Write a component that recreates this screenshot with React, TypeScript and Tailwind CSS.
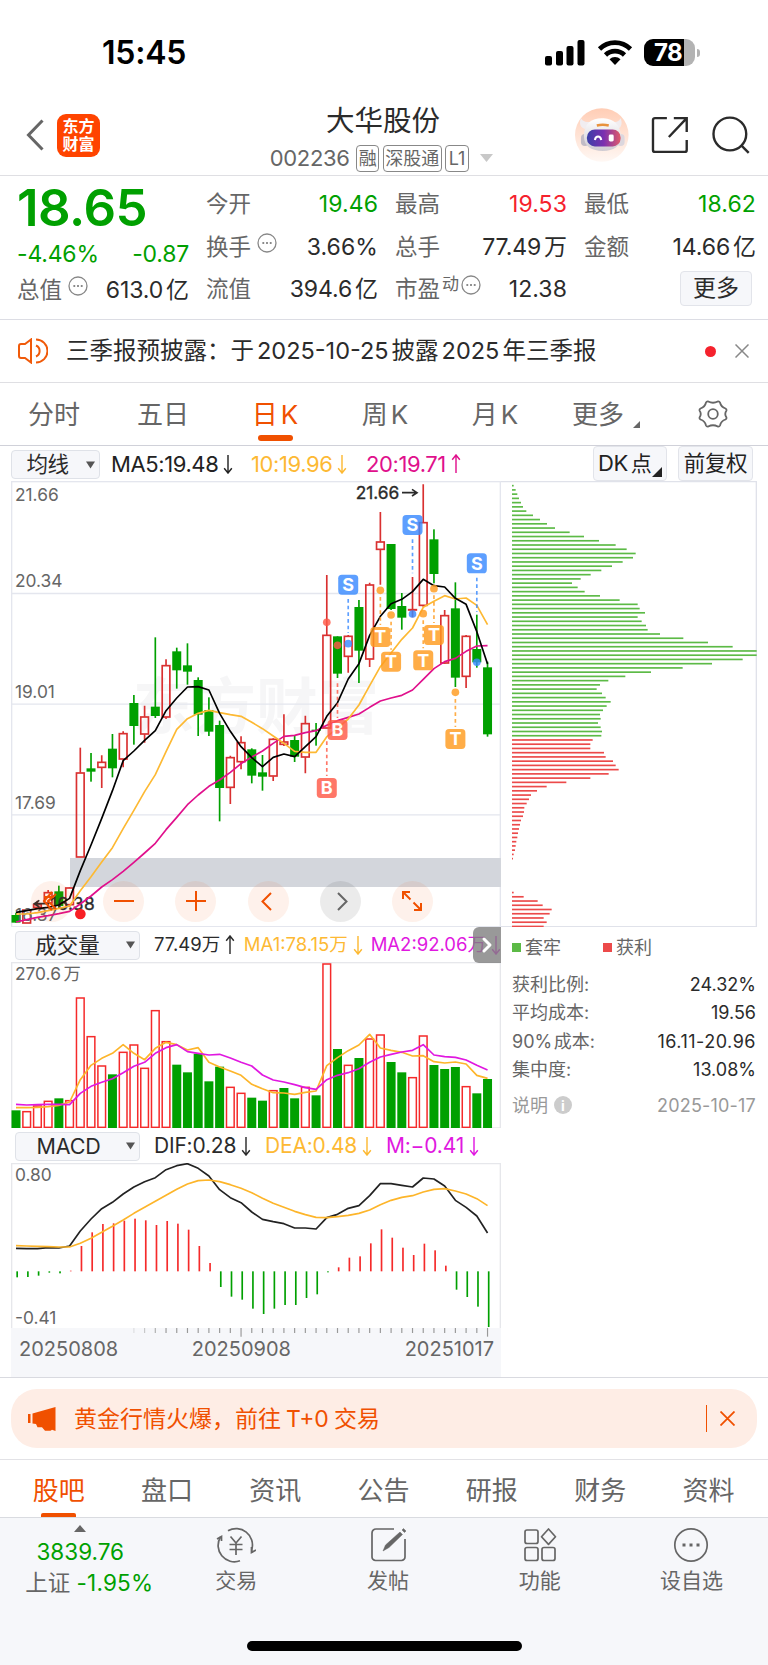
import type { ReactNode } from "react";
import { ChevronRight } from "lucide-react";

// chart coordinates are kept in thirds of a pixel
const STEP = 32.15;
const cx = (i: number) => 48 + STEP * i;
const line = (ys: number[]) => ys.map((y, i) => `${cx(i)},${y}`).join(" ");

type Candle = [up: 0 | 1, high: number, top: number, bottom: number, low: number];

const candles: Candle[] = [
  [0, 1298, 1305, 1328, 1328], [1, 1288, 1289, 1330, 1330], [1, 1262, 1273, 1283, 1285], [1, 1230, 1237, 1270, 1284],
  [0, 1217, 1234, 1278, 1285], [1, 1222, 1223, 1275, 1280], [1, 803, 878, 1132, 1132], [0, 819, 865, 875, 905],
  [1, 826, 846, 863, 924], [0, 762, 806, 865, 892], [1, 754, 760, 838, 862], [0, 645, 669, 738, 794],
  [1, 677, 710, 763, 788], [0, 472, 680, 708, 714], [1, 538, 556, 712, 717], [0, 503, 514, 571, 626],
  [0, 490, 556, 575, 614], [0, 592, 600, 704, 768], [0, 652, 690, 755, 768], [0, 722, 735, 924, 1024],
  [1, 827, 832, 923, 972], [1, 769, 787, 846, 868], [0, 805, 808, 887, 910], [0, 825, 877, 890, 932],
  [1, 775, 777, 889, 903], [1, 703, 785, 794, 798], [0, 768, 780, 830, 846], [1, 707, 730, 832, 880],
  [0, 729, 749, 753, 797], [1, 285, 465, 745, 745], [0, 469, 469, 581, 594], [1, 465, 468, 530, 578],
  [0, 360, 381, 512, 609], [1, 308, 314, 538, 561], [1, 96, 185, 209, 314], [0, 192, 192, 387, 390],
  [0, 339, 378, 413, 449], [1, 291, 388, 391, 412], [1, 13, 127, 377, 380], [0, 148, 178, 282, 310],
  [1, 390, 406, 550, 552], [0, 307, 385, 593, 621], [1, 465, 468, 590, 624], [0, 404, 507, 547, 563],
  [0, 545, 562, 763, 770],
];

const ma5 = [1297, 1292, 1286, 1282, 1275, 1255, 1172, 1095, 1015, 932, 842, 813, 781, 752, 692, 654, 621, 620, 630, 700, 754, 800, 833, 860, 832, 822, 830, 800, 770, 709, 668, 597, 551, 466, 409, 371, 358, 335, 298, 317, 321, 355, 373, 455, 552];
const ma10 = [1302, 1302, 1298, 1292, 1285, 1278, 1232, 1190, 1146, 1103, 1046, 991, 935, 884, 815, 748, 716, 700, 691, 698, 704, 709, 727, 746, 768, 790, 814, 817, 817, 770, 745, 717, 675, 617, 560, 519, 478, 444, 382, 364, 347, 357, 354, 376, 434];
const ma20 = [1326, 1319, 1312, 1307, 1301, 1294, 1272, 1248, 1221, 1199, 1174, 1147, 1119, 1090, 1049, 1012, 974, 945, 919, 900, 877, 851, 831, 813, 790, 769, 766, 758, 752, 736, 722, 712, 702, 682, 663, 654, 646, 630, 598, 566, 545, 535, 514, 498, 497];

const volUp = [1, 2, 3, 5, 6, 7, 8, 10, 11, 12, 13, 14, 20, 21, 24, 27, 29, 31, 33, 34, 37, 38, 42];
const volTop = [571, 573, 556, 542, 535, 540, 232, 348, 436, 463, 395, 373, 443, 270, 363, 434, 457, 401, 484, 440, 500, 518, 533, 542, 510, 504, 535, 500, 526, 130, 387, 434, 414, 355, 343, 426, 457, 471, 346, 435, 447, 441, 498, 520, 477];
const volMa1 = [563, 563, 562, 560, 556, 546, 479, 436, 415, 400, 374, 400, 419, 385, 367, 374, 390, 383, 427, 441, 453, 466, 493, 506, 518, 519, 523, 517, 513, 437, 413, 392, 375, 343, 384, 391, 397, 408, 407, 425, 429, 426, 432, 466, 475];
const volMa2 = [553, 555, 554, 553, 553, 554, 520, 499, 487, 476, 458, 439, 427, 400, 383, 374, 395, 400, 405, 403, 414, 427, 438, 465, 480, 486, 494, 503, 508, 479, 466, 458, 446, 427, 411, 403, 396, 391, 374, 405, 410, 412, 420, 436, 450];

const dif = [985, 986, 986, 983, 984, 978, 933, 897, 866, 847, 822, 801, 785, 773, 749, 737, 731, 745, 768, 809, 833, 848, 876, 898, 905, 911, 924, 924, 927, 893, 883, 865, 857, 827, 791, 791, 796, 801, 774, 777, 798, 841, 862, 888, 939];
const dea = [977, 978, 979, 980, 981, 981, 970, 955, 937, 919, 900, 880, 862, 844, 826, 808, 792, 782, 780, 785, 794, 805, 818, 835, 850, 862, 874, 884, 892, 893, 890, 886, 880, 870, 854, 841, 832, 827, 816, 808, 806, 813, 822, 836, 857];
const hist = [1072, 1071, 1067, 1058, 1060, 1052, 978, 937, 912, 910, 902, 896, 901, 915, 903, 911, 929, 978, 1029, 1101, 1130, 1139, 1166, 1182, 1166, 1155, 1155, 1134, 1123, 1057, 1042, 1013, 1009, 970, 928, 953, 983, 1005, 971, 991, 1037, 1109, 1131, 1160, 1221];

const trapped = [41, 47, 52, 57, 63, 69, 79, 99, 120, 141, 165, 209, 252, 297, 347, 380, 407, 399, 368, 336, 304, 272, 242, 216, 233, 254, 300, 359, 413, 419, 435, 413, 425, 438, 443, 480, 550, 624, 698, 770, 770, 728, 636, 548, 453, 376, 325, 300, 290, 306, 317, 332, 320, 309, 300, 302, 294, 302, 306, 304];
const profit = [278, 271, 271, 312, 317, 339, 347, 356, 326, 271, 199, 140, 111, 93, 87, 80, 73, 72, 69, 63, 60, 57, 54, 52, 49, 47, 45, 41, 39, 36, 36, 36, 36, 36, 36, 36, 41, 71, 113, 128, 155, 149, 131, 140, 131];

// letter, candle index, dot y, label y
const marks: [string, number, number, number][] = [
  ["B", 29, 427, 924], ["B", 30, 496, 750], ["S", 31, 491, 314], ["T", 34, 331, 471], ["T", 35, 405, 545],
  ["S", 37, 402, 135], ["T", 38, 401, 541], ["T", 39, 326, 465], ["T", 41, 637, 777], ["S", 43, 547, 250],
];
const markColor: Record<string, string> = { B: "#ff5a48", S: "#3a8bff", T: "#ff9c1f" };

const periods = ["分时", "五日", "日K", "周K", "月K"];
const infoTabs = ["股吧", "盘口", "资讯", "公告", "研报", "财务", "资料"];

function Dots() {
  return (
    <svg className="mb-2 ml-1.5 h-5 w-5 shrink-0" viewBox="0 0 20 20" fill="none" stroke="#888" strokeWidth="1.3">
      <circle cx="10" cy="10" r="9" />
      <path d="M5.4 10h1.8M9.1 10h1.8M12.8 10h1.8" strokeWidth="1.8" />
    </svg>
  );
}

function Quote({ label, value, unit, color = "text-[#2b2b2b]", extra }: { label: string; value: string; unit?: string; color?: string; extra?: ReactNode }) {
  return (
    <div className="flex h-[42.5px] items-center justify-between">
      <div className="flex items-center text-[#666]">
        {label}
        {extra}
      </div>
      <div className={`flex text-[23px] ${unit ? "tracking-[-0.1px]" : "tracking-[0.1px]"} ${color}`}>
        {value}
        {unit && <span className="ml-[3px]">{unit}</span>}
      </div>
    </div>
  );
}

function Select({ label, className }: { label: string; className: string }) {
  return (
    <div className={`flex shrink-0 items-center rounded-sm border border-[#dfe2e8] bg-[#f6f7fa] text-[#2b2b2b] ${className}`}>
      <span className="flex-1 text-center">{label}</span>
      <svg className="mr-1 h-2 w-[9px]" viewBox="0 0 9 8" fill="#555">
        <path d="M0 .5h9L4.5 7.5z" />
      </svg>
    </div>
  );
}

function Arrow({ up }: { up?: boolean }) {
  return (
    <svg className="ml-[5px] h-[20px] w-2.5 shrink-0" viewBox="0 0 10 21" fill="none" stroke="currentColor" strokeWidth="1.5">
      <path d={up ? "M5 20V1M1 6l4-5 4 5" : "M5 1v19M1 15l4 5 4-5"} />
    </svg>
  );
}

function StatusBar() {
  return (
    <div className="flex h-[80px] items-center pt-[25px] pr-[68px] pl-[102px]">
      <span className="flex-1 text-[32px] font-semibold tracking-[-0.2px] text-black">15:45</span>
      <svg className="h-[26px] w-[40px]" viewBox="0 0 40 26">
        <rect x="0" y="16" width="7" height="9.5" rx="2" />
        <rect x="11" y="11" width="7" height="14.5" rx="2" />
        <rect x="21.5" y="6" width="7" height="19.5" rx="2" />
        <rect x="32.5" y="0" width="7" height="25.5" rx="2" />
      </svg>
      <svg className="ml-3 h-[26px] w-[36px]" viewBox="0 0 36 26">
        <path d="M2.5 9a22 22 0 0 1 31 0" fill="none" stroke="#000" strokeWidth="4.6" />
        <path d="M8.5 15a13.5 13.5 0 0 1 19 0" fill="none" stroke="#000" strokeWidth="4.6" />
        <path d="M18 25l-5.5-5.7a8 8 0 0 1 11 0z" />
      </svg>
      <div className="ml-[11px] flex h-[27px] w-[51px] items-center overflow-hidden rounded-[9px] bg-[linear-gradient(90deg,#000_78%,#b3b3b3_78%)] pl-[10px] text-[24px] font-bold tracking-[-0.5px] text-white">
        78
      </div>
      <div className="ml-0.5 h-2 w-[3px] rounded-r-full bg-[#b3b3b3]" />
    </div>
  );
}

function Robot() {
  return (
    <svg className="h-[54px] w-[54px]" viewBox="0 0 54 54">
      <defs>
        <linearGradient id="halo" x1="0" y1="0" x2="0" y2="1">
          <stop offset="0" stopColor="#ffcdb5" />
          <stop offset="1" stopColor="#fff8f4" />
        </linearGradient>
        <linearGradient id="visor" x1="0" y1="0" x2="1" y2="0">
          <stop offset="0" stopColor="#3b3fa8" />
          <stop offset=".5" stopColor="#7b2fb0" />
          <stop offset="1" stopColor="#e05a6a" />
        </linearGradient>
        <linearGradient id="shell" x1="0" y1="0" x2="0" y2="1">
          <stop offset="0" stopColor="#fff" />
          <stop offset="1" stopColor="#cfcbd2" />
        </linearGradient>
      </defs>
      <circle cx="27" cy="27" r="27" fill="url(#halo)" />
      <path d="M6 10c-2 5-1 9 4 11l5-7c-5 0-7-1-9-4zM46 10c2 5 1 9-3 11l-5-7c5 0 6-1 8-4z" fill="#f1edf0" />
      <rect x="6" y="26" width="8" height="12" rx="4" fill="#c2bcc6" />
      <rect x="42" y="26" width="8" height="12" rx="4" fill="#dcd7de" />
      <path d="M9 28C9 15 17 10 27 10s19 5 19 18c0 11-7 15-18 15S9 39 9 28z" fill="url(#shell)" />
      <rect x="12" y="21.5" width="34" height="17" rx="8" fill="url(#visor)" />
      <path d="M20 32c1-4.5 5.5-4.5 6.5 0" fill="none" stroke="#fff" strokeWidth="2" />
      <rect x="34" y="26.5" width="5" height="7" rx="1.5" fill="#fff" />
      <path d="M22 17.5q6-1.5 12 0" stroke="#e8923c" strokeWidth="2.5" fill="none" />
    </svg>
  );
}

function Header() {
  return (
    <header className="flex h-[96px] items-center justify-between border-b border-[#dfdfe3] pt-[20px] pr-[18px] pl-[26px]">
      <div className="flex w-[200px] items-center pb-[5px]">
        <svg className="h-[32px] w-[18px]" viewBox="0 0 18 32" fill="none" stroke="#666" strokeWidth="3">
          <path d="M16.5 1.5L2.5 16l14 14.5" />
        </svg>
        <div className="ml-[13px] flex h-[43px] w-[43px] flex-col items-center justify-center rounded-[9px] bg-[#ff4400] text-[16px] leading-[18px] font-bold text-white">
          <span>东方</span>
          <span>财富</span>
        </div>
      </div>
      <div className="mr-[36px] flex flex-col items-center">
        <h1 className="ml-px text-[28.5px] leading-[36px] text-[#2b2b2b]">大华股份</h1>
        <div className="mt-[5px] -ml-0.5 flex h-[28px] items-center gap-[3.5px] text-[18px] text-[#666]">
          <span className="mr-[3px] text-[22px] tracking-[-0.3px]">002236</span>
          <span className="flex h-[27px] items-center rounded border-[1.5px] border-[#888] px-[1.5px]">融</span>
          <span className="flex h-[27px] items-center rounded border-[1.5px] border-[#888] px-[1.5px]">深股通</span>
          <span className="flex h-[27px] items-center rounded border-[1.5px] border-[#888] px-[2.5px]">L1</span>
          <svg className="ml-[8px] h-2 w-[13px]" viewBox="0 0 13 8" fill="#c8c8c8">
            <path d="M0 0h13L6.5 8z" />
          </svg>
        </div>
      </div>
      <div className="flex w-[175px] items-center pb-[5px]">
        <Robot />
        <svg className="ml-[22px] h-[38px] w-[38px]" viewBox="0 0 38 38" fill="none" stroke="#2b2b2b" strokeWidth="2.4">
          <path d="M16 2H4a2 2 0 0 0-2 2v30a2 2 0 0 0 2 2h30a2 2 0 0 0 2-2V24M23 2h13v14M36 2L18 21" />
        </svg>
        <svg className="ml-[24px] h-[38px] w-[38px]" viewBox="0 0 38 38" fill="none" stroke="#2b2b2b" strokeWidth="2.4">
          <circle cx="18" cy="18" r="16.5" />
          <path d="M29.5 29.5L37 37" />
        </svg>
      </div>
    </header>
  );
}

function QuotePanel() {
  return (
    <section className="flex h-[144px] gap-[17px] border-b border-[#dcdde4] pr-[12px] pl-[17px] text-[22.5px]">
      <div className="w-[172px] pt-[5px]">
        <div className="h-[53px] text-[51px] leading-[53px] font-semibold tracking-[-0.5px] text-[#00a000]">18.65</div>
        <div className="mt-[6px] flex h-[29px] items-center justify-between text-[23px] tracking-[-0.2px] text-[#00a000]">
          <span>-4.46%</span>
          <span>-0.87</span>
        </div>
        <Quote label="总值" value="613.0" unit="亿" extra={<Dots />} />
      </div>
      <div className="w-[172px] pt-[7px]">
        <Quote label="今开" value="19.46" color="text-[#00a000]" />
        <Quote label="换手" value="3.66%" extra={<Dots />} />
        <Quote label="流值" value="394.6" unit="亿" />
      </div>
      <div className="w-[172px] pt-[7px]">
        <Quote label="最高" value="19.53" color="text-[#f5222d]" />
        <Quote label="总手" value="77.49" unit="万" />
        <Quote
          label="市盈"
          value="12.38"
          extra={
            <>
              <span className="mb-2.5 ml-0.5 text-[17px]">动</span>
              <span className="-ml-1">
                <Dots />
              </span>
            </>
          }
        />
      </div>
      <div className="w-[172px] pt-[7px]">
        <Quote label="最低" value="18.62" color="text-[#00a000]" />
        <Quote label="金额" value="14.66" unit="亿" />
        <div className="mt-[3px] mr-[4px] ml-auto flex h-[35px] w-[72px] items-center justify-center rounded-[4px] border-[1.5px] border-[#e2e4ea] bg-[#f6f7fa] text-[23px] text-[#2b2b2b]">
          更多
        </div>
      </div>
    </section>
  );
}

function Notice() {
  return (
    <section className="flex h-[63px] items-center border-b border-[#dfdfe3] pr-[19px] pl-[18px]">
      <svg className="h-[26px] w-[30px]" viewBox="0 0 30 26" fill="none" stroke="#f05a0a" strokeWidth="2">
        <path d="M13 1.5v23L7 20H3a2 2 0 0 1-2-2V8a2 2 0 0 1 2-2h4zM18 7.5a6 6 0 0 1 0 11M18 1.5a11.5 11.5 0 0 1 0 23" />
      </svg>
      <p className="ml-[18px] flex-1 text-[23.5px] text-[#2b2b2b]">
        三季报预披露：于<span className="mx-[3px]">2025-10-25</span>披露<span className="mx-[3px]">2025</span>年三季报
      </p>
      <i className="h-[11px] w-[11px] rounded-full bg-[#f5222d]" />
      <svg className="ml-[19px] h-[14px] w-[14px]" viewBox="0 0 14 14" stroke="#888" strokeWidth="1.5">
        <path d="M.5.5l13 13M13.5.5l-13 13" />
      </svg>
    </section>
  );
}

function PeriodTabs() {
  return (
    <nav className="flex h-[63px] items-center border-b border-[#d0d1d9] text-[26px] text-[#666]">
      {periods.map((p, i) => (
        <div key={p} className={`relative flex h-full items-center justify-center ${i === 0 ? "w-[108px]" : "w-[110px]"} ${i > 1 ? "pl-[4px]" : ""} ${p === "日K" ? "text-[#f05000]" : ""}`}>
          {p.endsWith("K") ? (
            <>
              {p[0]}
              <span className="ml-[3px]">K</span>
            </>
          ) : (
            p
          )}
          {p === "日K" && <i className="absolute bottom-1 h-[6px] w-[35px] rounded-[3px] bg-[#f05000]" />}
        </div>
      ))}
      <div className="ml-[24px] flex items-center">
        更多
        <svg className="mt-5 ml-[9px] h-[7px] w-[7px]" viewBox="0 0 7 7" fill="#666">
          <path d="M7 0v7H0z" />
        </svg>
      </div>
      <svg className="ml-[58px] h-[28px] w-[30px]" viewBox="0 0 30 28" fill="none" stroke="#666" strokeWidth="1.8" strokeLinejoin="round">
        <path d="M10.2 1.5Q15 4 19.8 1.5Q21.5 1.3 22 2.5Q23 7 27.5 8.5Q28.8 9.3 28.5 10.5Q26 14 28.5 17.5Q28.8 18.7 27.5 19.5Q23 21 22 25.5Q21.5 26.7 19.8 26.5Q15 24 10.2 26.5Q8.5 26.7 8 25.5Q7 21 2.5 19.5Q1.2 18.7 1.5 17.5Q4 14 1.5 10.5Q1.2 9.3 2.5 8.5Q7 7 8 2.5Q8.5 1.3 10.2 1.5z" />
        <circle cx="15" cy="14" r="4.8" />
      </svg>
    </nav>
  );
}

function MaBar() {
  return (
    <div className="flex h-[35px] items-center pr-[15px] pl-[11px] text-[22px] tracking-[-0.4px]">
      <Select label="均线" className="mt-[2px] h-[29px] w-[89px] text-[21.5px] [&>span]:pr-[3px]" />
      <span className="mt-px ml-[11px] flex w-[140px] items-center text-[#222]">MA5:19.48<Arrow /></span>
      <span className="mt-px flex w-[115px] items-center text-[#fdb933]">10:19.96<Arrow /></span>
      <span className="mt-px flex flex-1 items-center text-[#e0108c]">20:19.71<Arrow up /></span>
      <span className="relative flex h-[35px] w-[74px] items-center rounded-[4px] border border-[#e2e4ea] bg-[#f6f7fa] pl-[4px] text-[#222]">
        DK<span className="ml-[3px] text-[21px]">点</span>
        <svg className="absolute right-1 bottom-[3px] h-[10px] w-[10px]" viewBox="0 0 10 10">
          <path d="M10 0v10H0z" fill="#222" />
        </svg>
      </span>
      <span className="ml-[11px] flex h-[35px] w-[75px] items-center justify-center rounded-[4px] border border-[#e2e4ea] bg-[#f6f7fa] text-[21.5px] text-[#222]">
        前复权
      </span>
    </div>
  );
}

function PriceChart() {
  return (
    <svg className="block h-[446px] w-[490px]" viewBox="33 3 1470 1338">
      <text x="398" y="748" fill="#f6f6f7" fontSize="185" fontWeight="700">
        东方财富
      </text>
      <g stroke="#e4e6ee" strokeWidth="4">
        <path d="M33 340.5H1503M33 672.5H1503M33 1004.5H1503" />
        <rect x="35" y="5" width="1466" height="1335" fill="none" />
      </g>
      <rect x="210" y="1134" width="1293" height="87" fill="#d3d6dc" />
      {candles.map(([up, high, top, bottom, low], i) =>
        up ? (
          <g key={i} stroke="#d93030" strokeWidth="5" fill="none">
            <path d={`M${cx(i)} ${high}V${top}M${cx(i)} ${bottom}V${low}`} />
            <rect x={cx(i) - 11.5} y={top + 1} width="23" height={Math.max(bottom - top - 2, 1)} />
          </g>
        ) : (
          <g key={i} fill="#00a000">
            <rect x={cx(i) - 2.5} y={high} width="5" height={low - high} />
            <rect x={cx(i) - 13.5} y={top} width="27" height={bottom - top} />
          </g>
        )
      )}
      <g fontSize="52" fill="#666">
        <text x="45" y="62">21.66</text>
        <text x="45" y="320">20.34</text>
        <text x="45" y="655">19.01</text>
        <text x="45" y="988">17.69</text>
        <text x="45" y="1322">16.37</text>
      </g>
      <g fontSize="52" fill="#2b2b2b" stroke="#2b2b2b" strokeWidth="1">
        <text x="1067" y="57">21.66</text>
        <path d="M1206 38h44M1236 28l15 10-15 10" fill="none" strokeWidth="5" />
        <text x="150" y="1289" textLength="134">16.38</text>
        <path d="M148 1271h-44M118 1261l-15 10 15 10" fill="none" strokeWidth="5" />
      </g>
      <g fill="none" strokeWidth="5" strokeLinejoin="round">
        <polyline points={line(ma20)} stroke="#e0108c" />
        <polyline points={line(ma10)} stroke="#fdb933" />
        <polyline points={line(ma5)} stroke="#000" />
      </g>
      <circle cx="241" cy="1302" r="16" fill="#f81f24" />
      {marks.map(([letter, i, dot, label]) => {
        const color = markColor[letter];
        const below = label > dot;
        return (
          <g key={i} opacity=".82">
            <circle cx={cx(i)} cy={dot} r="11.5" fill={color} />
            <path
              d={below ? `M${cx(i)} ${letter === "B" ? Math.max(dot + 112, label - 140) : dot + 20}V${label - 36}` : `M${cx(i)} ${label + 43}V${Math.min(dot - 20, label + 145)}`}
              stroke={color}
              strokeWidth="5"
              strokeDasharray="11 9"
            />
            <rect x={cx(i) - 30} y={label - 30} width="60" height="60" rx="11" fill={color} />
            <text x={cx(i)} y={label + 19} fontSize="54" fontWeight="700" fill="#fff" textAnchor="middle">
              {letter}
            </text>
          </g>
        );
      })}
    </svg>
  );
}

function ChartTools() {
  const round = "flex h-[41px] w-[41px] items-center justify-center rounded-full bg-[#f05000]/8 text-[#f05000]";
  return (
    <div className="absolute bottom-[5.5px] left-[20px] flex gap-[31.2px]">
      <div className={round}>
        <svg className="mr-1 h-6 w-5" viewBox="0 0 20 24" fill="none" stroke="currentColor" strokeWidth="2">
          <path d="M12 3L4 12l8 9M16 5L8 12l8 8M4 8h10" />
        </svg>
      </div>
      <div className={round}>
        <i className="h-[2px] w-5 bg-current" />
      </div>
      <div className={round}>
        <svg className="h-5 w-5" viewBox="0 0 20 20" stroke="currentColor" strokeWidth="2">
          <path d="M0 10h20M10 0v20" />
        </svg>
      </div>
      <div className={round}>
        <svg className="mr-1 h-[19px] w-[11px]" viewBox="0 0 11 19" fill="none" stroke="currentColor" strokeWidth="2">
          <path d="M10 1L1.5 9.5 10 18" />
        </svg>
      </div>
      <div className="flex h-[41px] w-[41px] items-center justify-center rounded-full bg-black/8 text-[#666]">
        <svg className="ml-1 h-[19px] w-[11px]" viewBox="0 0 11 19" fill="none" stroke="currentColor" strokeWidth="2">
          <path d="M1 1l8.5 8.5L1 18" />
        </svg>
      </div>
      <div className={round}>
        <svg className="h-5 w-5" viewBox="0 0 20 20" fill="none" stroke="currentColor" strokeWidth="2">
          <path d="M1 8V1h7M1 1l7.5 7.5M19 12v7h-7M19 19l-7.5-7.5" />
        </svg>
      </div>
    </div>
  );
}

function ChipChart() {
  return (
    <svg className="block h-[446px] w-[257px]" viewBox="3 3 771 1338">
      <path d="M3 5H769V1340H3" fill="none" stroke="#e0e2ea" strokeWidth="4" />
      {[...trapped, ...profit].map((end, i) => (
        <rect key={i} x="36" y={14.5 + i * 12.715} width={end - 36} height="5" fill={i < trapped.length ? "#5cba46" : "#ec4a4a"} />
      ))}
    </svg>
  );
}

function VolumeChart() {
  return (
    <svg className="block h-[166px] w-[490px]" viewBox="33 126 1470 498">
      <rect x="35" y="128" width="1466" height="496" fill="none" stroke="#e6e7eb" strokeWidth="4" />
      <text x="45" y="181" fontSize="52" fill="#666">
        270.6<tspan dx="8">万</tspan>
      </text>
      {volTop.map((y, i) =>
        volUp.includes(i) ? (
          <rect key={i} x={cx(i) - 11.5} y={y + 2} width="23" height={620 - y} fill="#fff" stroke="#f52a2a" strokeWidth="4.5" />
        ) : (
          <rect key={i} x={cx(i) - 13.5} y={y} width="27" height={624 - y} fill="#00a000" />
        )
      )}
      <g fill="none" strokeWidth="5" strokeLinejoin="round">
        <polyline points={line(volMa1)} stroke="#fdb52a" />
        <polyline points={line(volMa2)} stroke="#e018e0" />
      </g>
    </svg>
  );
}

function MacdChart() {
  return (
    <svg className="block h-[165px] w-[490px]" viewBox="33 729 1470 495">
      <path d="M35 1224V731H1501V1224" fill="none" stroke="#e6e7eb" strokeWidth="4" />
      <g fontSize="52" fill="#666">
        <text x="45" y="783">0.80</text>
        <text x="45" y="1212">-0.41</text>
      </g>
      {hist.map((y, i) => (
        <rect key={i} x={cx(i) + 1} y={Math.min(y, 1054)} width="5" height={Math.abs(1054 - y)} fill={y < 1054 ? "#f52a2a" : "#00a000"} />
      ))}
      <g fill="none" strokeWidth="5" strokeLinejoin="round">
        <polyline points={line(dif)} stroke="#222" />
        <polyline points={line(dea)} stroke="#fdb52a" />
      </g>
    </svg>
  );
}

function DateAxis() {
  return (
    <div className="h-[49px] bg-[#f6f7fa] text-[20px] text-[#666]">
      <svg className="block h-[9px] w-[490px]" viewBox="33 1224 1470 27" stroke="#999" strokeWidth="3.5">
        {hist.map((_, i) => i > 10 && <path key={i} opacity={i < 14 ? (i - 10) / 4 : 1} d={`M${cx(i)} 1224v${i === 21 || i === 44 ? 26 : 15}`} />)}
      </svg>
      <div className="flex justify-between pr-[7px] pl-[8px] leading-[25px]">
        <span>20250808</span>
        <span className="-ml-[40px]">20250908</span>
        <span>20251017</span>
      </div>
    </div>
  );
}

function ChipInfo() {
  const rows = [
    ["获利比例:", "24.32%"],
    ["平均成本:", "19.56"],
    ["90%\u200a成本:", "16.11-20.96"],
    ["集中度:", "13.08%"],
  ];
  return (
    <div className="pr-[12px] pl-[11px] text-[18px] text-[#666]">
      <div className="flex h-[40px] items-center">
        <i className="mr-1 h-[9px] w-[9px] bg-[#5cba46]" />
        套牢
        <i className="mr-1 ml-[42px] h-[9px] w-[9px] bg-[#ec4a4a]" />
        获利
      </div>
      <div className="pt-[3px]">
        {rows.map(([name, value]) => (
          <div key={name} className="flex h-[28.5px] items-center justify-between">
            <span>{name}</span>
            <span className={`text-[#2b2b2b] ${value.includes("-") ? "tracking-[0.5px]" : ""}`}>{value}</span>
          </div>
        ))}
      </div>
      <div className="mt-[7px] flex h-[28px] items-center text-[#999]">
        说明
        <i className="ml-[6px] flex h-[18px] w-[18px] items-center justify-center rounded-full bg-[#ccc] text-[14px] font-bold text-white not-italic">i</i>
        <span className="ml-auto tracking-[0.2px]">2025-10-17</span>
      </div>
    </div>
  );
}

function Charts() {
  return (
    <section className="flex h-[897px] border-b border-[#d9dae0] pl-[11px]">
      <div className="w-[490px]">
        <div className="relative">
          <PriceChart />
          <ChartTools />
        </div>
        <div className="relative flex h-[35px] items-center pt-px pl-[4px] text-[18.5px] whitespace-nowrap">
          <Select label="成交量" className="h-[29px] w-[125px] text-[21.5px] [&>span]:pr-[7px]" />
          <span className="ml-[14px] flex w-[90px] items-center text-[#2b2b2b]">77.49万<Arrow up /></span>
          <span className="flex w-[127px] items-center text-[#fdb933]">MA1:78.15万<Arrow /></span>
          <span className="flex items-center text-[#e018e0]">MA2:92.06万<Arrow /></span>
          <div className="absolute top-0 right-0 flex h-[36px] w-[28px] items-center justify-center rounded-l-md bg-[#7f7f7f]/80 text-white">
            <ChevronRight size={24} strokeWidth={3} />
          </div>
        </div>
        <VolumeChart />
        <div className="flex h-[35px] items-center pt-px pl-[4px] text-[21px] tracking-[-0.2px] whitespace-nowrap">
          <Select label="MACD" className="h-[29px] w-[125px] text-[21.5px] [&>span]:pr-[5px]" />
          <span className="ml-[14px] flex w-[111px] items-center text-[#2b2b2b]">DIF:0.28<Arrow /></span>
          <span className="flex w-[121px] items-center text-[#fdb933]">DEA:0.48<Arrow /></span>
          <span className="flex items-center text-[#e018e0]">M:−0.41<Arrow /></span>
        </div>
        <MacdChart />
        <DateAxis />
      </div>
      <div className="w-[267px]">
        <ChipChart />
        <ChipInfo />
      </div>
    </section>
  );
}

function Banner() {
  return (
    <section className="h-[82px] border-b border-[#e2e2e6] pt-[11px] pr-[11px] pl-[11px]">
      <div className="flex h-[59px] items-center rounded-[26px] bg-[#feede5] pr-[22px] pl-[17px] text-[#f05000]">
        <svg className="h-[24px] w-[28px]" viewBox="0 0 28 24" fill="currentColor">
          <path d="M0 7h2.5v9H0zM4.5 6.5L27.5 0v24l-3.5-1.2-1.5 1H17l-3-3.5H9.5L8 17l-3.5-.5z" />
        </svg>
        <p className="mt-px ml-[18px] flex-1 text-[23px]">
          黄金行情火爆，前往<span className="mx-[5px]">T+0</span>交易
        </p>
        <i className="h-[27px] w-[1.5px] bg-[#f05000]" />
        <svg className="ml-[13px] h-[15px] w-[15px]" viewBox="0 0 15 15" stroke="currentColor" strokeWidth="1.8">
          <path d="M.5.5l14 14M14.5.5l-14 14" />
        </svg>
      </div>
    </section>
  );
}

function InfoTabs() {
  return (
    <nav className="flex h-[58px] items-center border-b border-[#d9dbe0] px-[4.5px] text-[26px] text-[#666]">
      {infoTabs.map((t, i) => (
        <div key={t} className={`relative flex h-full w-[108.3px] items-center justify-center pt-1 ${i === 0 ? "text-[#f05000]" : ""}`}>
          {t}
          {i === 0 && <i className="absolute bottom-0 h-[4.5px] w-[35px] rounded-t-[2px] bg-[#f05000]" />}
        </div>
      ))}
    </nav>
  );
}

const actions: { label: string; icon: ReactNode }[] = [
  {
    label: "交易",
    icon: (
      <>
        <path d="M3.5 10A16.3 16.3 0 0 0 23 33.8M11 3.8A16.3 16.3 0 0 1 34.8 22.5V26" />
        <path d="M0 12l4.5-2.5V14M39 23l-4.500 2.500V20" />
        <path d="M13.500 9.500L19 16l5.500-6.500M19 16v12M12.500 17.500h13M12.500 22.500h13" />
      </>
    ),
  },
  {
    label: "发帖",
    icon: (
      <>
        <path d="M25 2H7a4 4 0 0 0-4 4v24a3.5 3.5 0 0 0 3.5 3.5h26A3.5 3.5 0 0 0 36 30V12" />
        <path d="M14 24l2.5-6L31 5l2.5 2.5L20 20.5zM33 3l1.5-1.5 2.5 2.5L35.5 5.5z" fill="#666" strokeWidth="0.5" />
      </>
    ),
  },
  {
    label: "功能",
    icon: (
      <>
        <rect x="4" y="3" width="13" height="13.5" rx="2" />
        <rect x="4" y="20.5" width="13" height="13" rx="2" />
        <rect x="21" y="20.5" width="13" height="13" rx="2" />
        <path d="M27.5 2l7 7.7-7 7.7-7-7.7z" strokeLinejoin="round" />
      </>
    ),
  },
  {
    label: "设自选",
    icon: (
      <>
        <circle cx="19" cy="18" r="16.2" />
        <path d="M10.5 18h3M17.5 18h3M24.5 18h3" strokeWidth="3" />
      </>
    ),
  },
];

function BottomBar() {
  return (
    <footer className="h-[148px] bg-[#f6f7fa] text-[21px] text-[#666]">
      <div className="flex h-[123px]">
        <div className="flex w-[160.5px] flex-col items-center pt-[7px] text-[22.5px]">
          <svg className="h-[7px] w-[12px]" viewBox="0 0 12 7" fill="#666">
            <path d="M6 0l6 7H0z" />
          </svg>
          <span className="mt-[5px] leading-[30px] text-[#00a000]">3839.76</span>
          <span className="ml-[18px] leading-[32px] whitespace-nowrap">
            上证 <span className="tracking-[0.2px] text-[#00a000]">-1.95%</span>
          </span>
        </div>
        {actions.map(({ label, icon }) => (
          <div key={label} className="flex w-[151.7px] flex-col items-center pt-[9px]">
            <svg className="h-[36px] w-[40px]" viewBox="-1 0 40 36" fill="none" stroke="#666" strokeWidth="1.7">
              {icon}
            </svg>
            <span className="mt-[3px] leading-[30px]">{label}</span>
          </div>
        ))}
      </div>
      <div className="mx-auto h-[9.5px] w-[275px] rounded-full bg-black" />
    </footer>
  );
}

export default function App() {
  return (
    <div className="h-[1665px] w-[768px] overflow-hidden bg-white font-['Inter','Noto_Sans_CJK_SC',sans-serif]">
      <StatusBar />
      <Header />
      <QuotePanel />
      <Notice />
      <PeriodTabs />
      <MaBar />
      <Charts />
      <Banner />
      <InfoTabs />
      <BottomBar />
    </div>
  );
}
